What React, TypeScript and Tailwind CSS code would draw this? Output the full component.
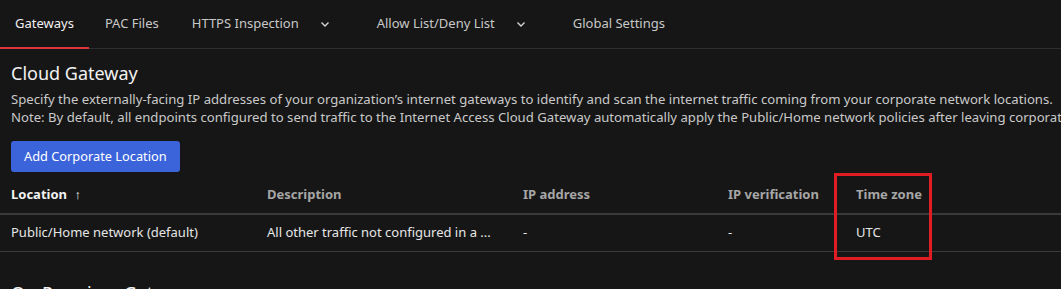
import React from "react";

type Row = {
  location: string;
  description: string;
  ip: string;
  verification: string;
  timezone: string;
};

const rows: Row[] = [
  {
    location: "Public/Home network (default)",
    description: "All other traffic not configured in a ...",
    ip: "-",
    verification: "-",
    timezone: "UTC",
  },
];

const Chevron = () => (
  <svg width="12" height="12" viewBox="0 0 12 12" fill="none" className="ml-[20px]">
    <path d="M2.5 4.5 6 8l3.5-3.5" stroke="#d4d4d4" strokeWidth="1.4" />
  </svg>
);

// Top navigation with the active tab underlined in red
const Tabs = () => (
  <div className="flex h-[49px] border-b border-[#2f2f2f] text-[13px]">
    <div className="relative flex items-center px-[15px] text-[#f0f0f0]">
      Gateways
      <span className="absolute left-0 right-0 bottom-[-1px] h-[2px] bg-[#e0363b]" />
    </div>
    <div className="flex items-center px-[16px] text-[#c8c8c8]">PAC Files</div>
    <div className="flex items-center pl-[17px] pr-[40px] text-[#c8c8c8]">
      HTTPS Inspection
      <Chevron />
    </div>
    <div className="flex items-center pl-[6px] pr-[40px] text-[#c8c8c8]">
      Allow List/Deny List
      <Chevron />
    </div>
    <div className="flex items-center pl-[6px] text-[#c8c8c8]">Global Settings</div>
  </div>
);

export default function App() {
  return (
    <div
      className="h-[289px] w-[1061px] overflow-hidden bg-[#161616] text-white"
      style={{ fontFamily: '"Segoe UI", "Noto Sans", sans-serif' }}
    >
      <Tabs />
      <div className="px-[11px] pt-[10px]">
        <h1 className="text-[18px] leading-[28px] text-[#f2f2f2]">Cloud Gateway</h1>
        <p className="mt-[3px] whitespace-nowrap text-[13.15px] leading-[18px] text-[#c9c9c9]">
          Specify the externally-facing IP addresses of your organization’s internet gateways to identify and scan the internet traffic coming from your corporate network locations.
        </p>
        <p className="whitespace-nowrap text-[13.15px] leading-[18px] text-[#c9c9c9]">
          Note: By default, all endpoints configured to send traffic to the Internet Access Cloud Gateway automatically apply the Public/Home network policies after leaving corporate locations.
        </p>
        <button className="mt-[15px] h-[31px] rounded-[3px] bg-[#3b64db] px-[13px] text-[12.8px] text-white">
          Add Corporate Location
        </button>
      </div>

      <table className="w-[1100px] table-fixed text-[13px]">
        <colgroup>
          <col className="w-[256px]" />
          <col className="w-[256px]" />
          <col className="w-[205px]" />
          <col className="w-[128px]" />
          <col className="w-[205px]" />
          <col />
        </colgroup>
        <thead>
          <tr className="h-[42px] border-b-2 border-[#3a3a3a] text-left font-semibold">
            <th className="pl-[11px] pt-[5px] text-[#f2f2f2]">
              Location <span className="ml-[4px] font-normal">↑</span>
            </th>
            <th className="pl-[11px] pt-[5px] text-[#a6a6a6]">Description</th>
            <th className="pl-[11px] pt-[5px] text-[#a6a6a6]">IP address</th>
            <th className="pl-[11px] pt-[5px] text-[#a6a6a6]">IP verification</th>
            <th className="pl-[11px] pt-[5px] text-[#a6a6a6]">Time zone</th>
            <th className="pl-[11px]" />
          </tr>
        </thead>
        <tbody>
          {rows.map((r) => (
            <tr key={r.location} className="h-[37px] border-b border-[#3a3a3a] text-[#e6e6e6]">
              <td className="pl-[11px]">{r.location}</td>
              <td className="whitespace-nowrap pl-[11px]">{r.description}</td>
              <td className="pl-[11px]">{r.ip}</td>
              <td className="pl-[11px]">{r.verification}</td>
              <td className="relative pl-[11px]">
                {r.timezone}
                <span className="absolute left-[-11px] top-[-42px] h-[87px] w-[98px] border-[3px] border-[#e11d24]" />
              </td>
              <td className="pl-[88px] text-[#8a8a8a]">-</td>
            </tr>
          ))}
        </tbody>
      </table>

      <h2 className="mt-[27px] px-[11px] text-[18px] leading-[28px] text-[#f2f2f2]">On-Premises Gateway</h2>
    </div>
  );
}
